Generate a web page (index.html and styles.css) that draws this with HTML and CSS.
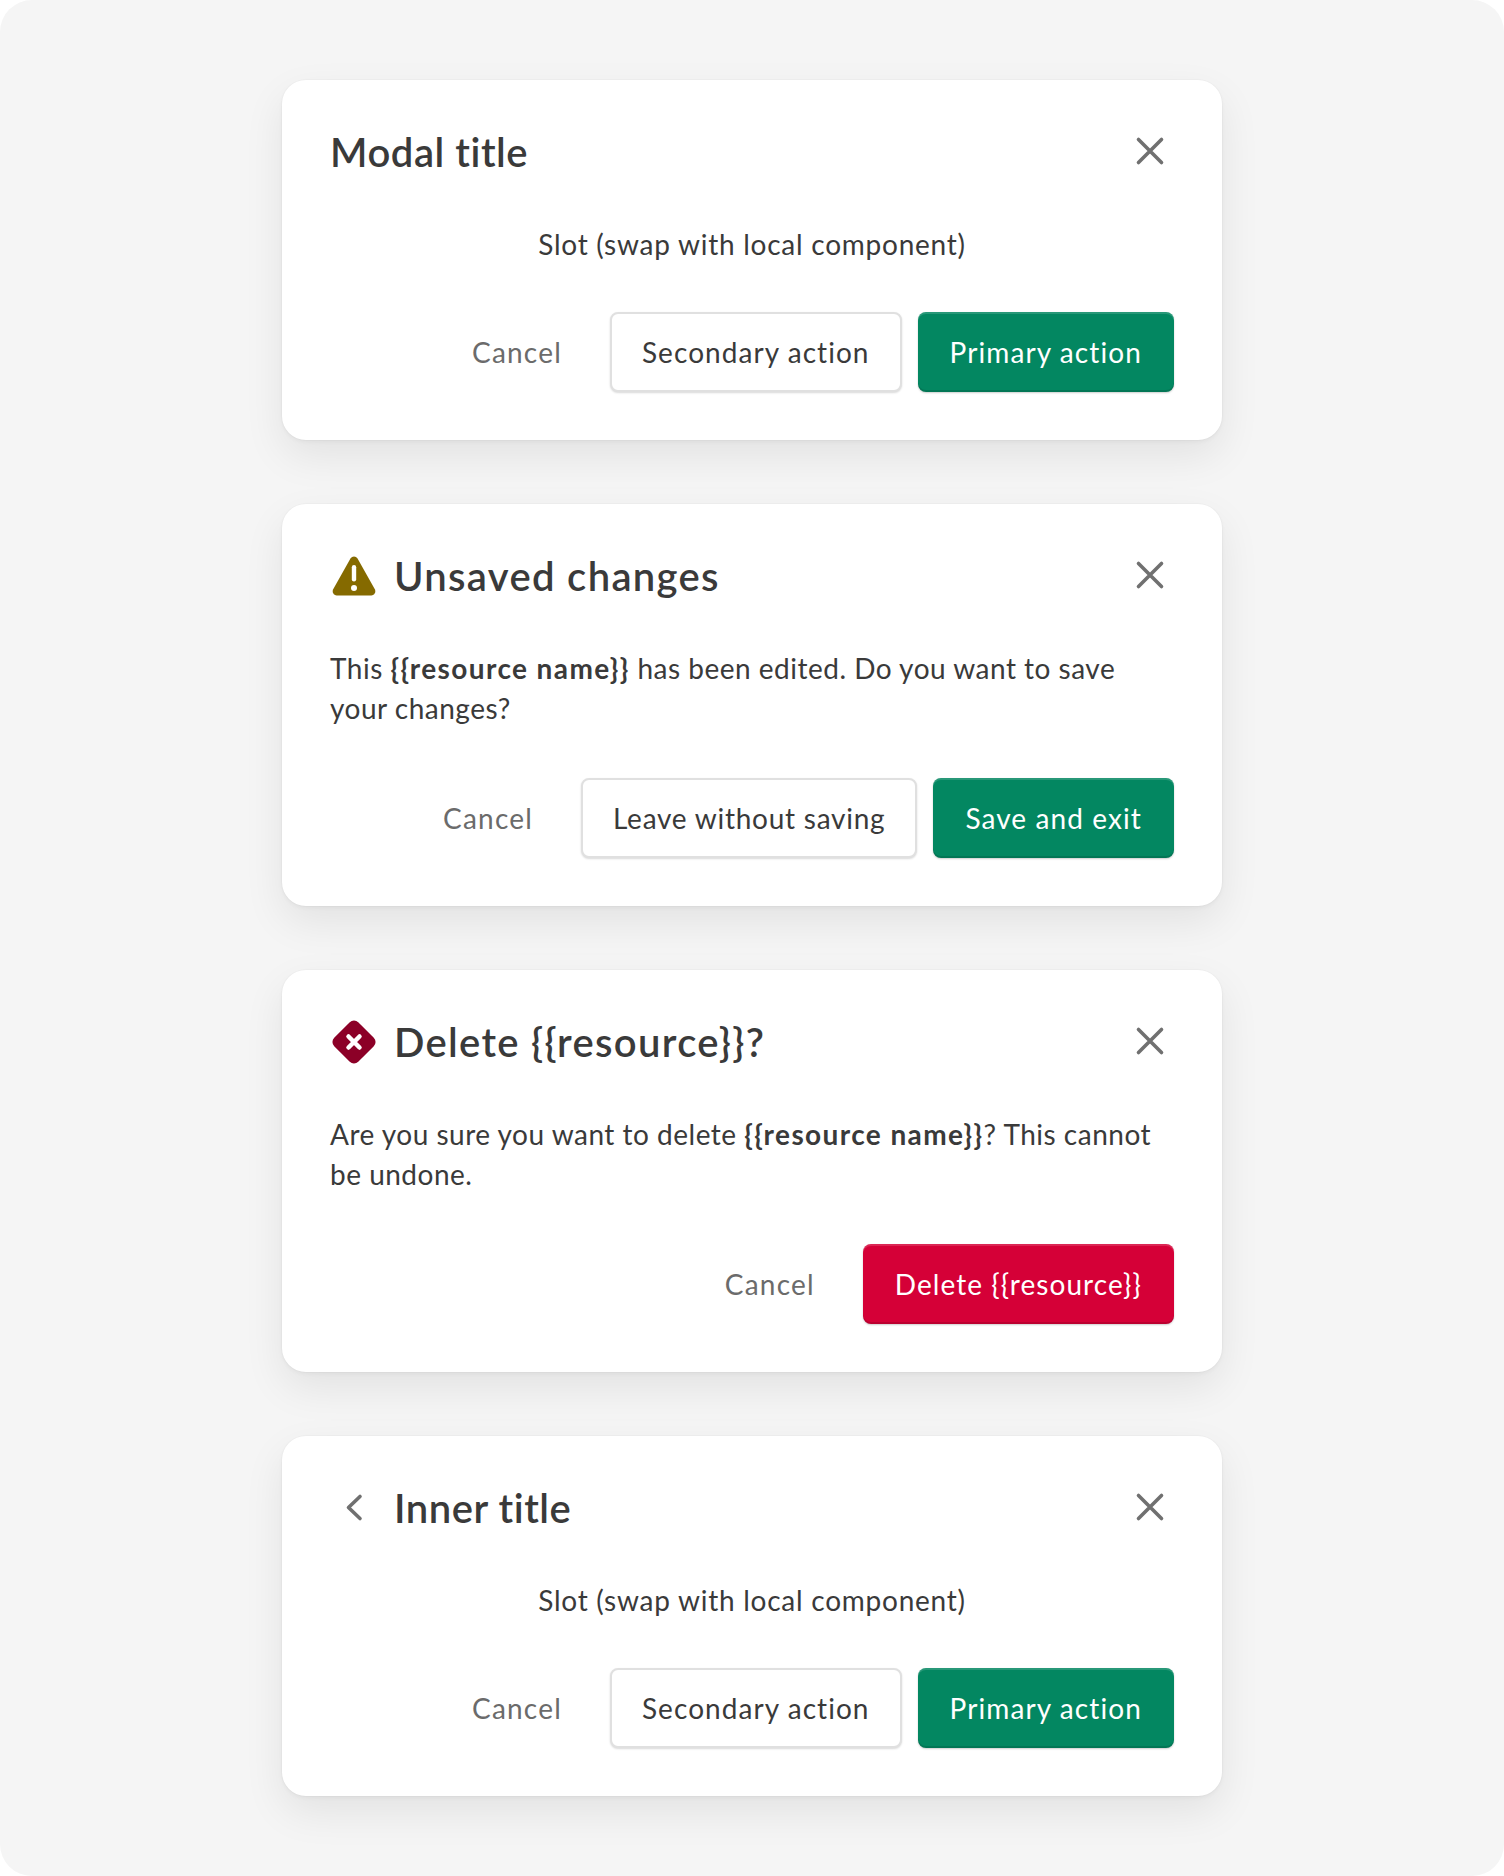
FILE: index.html
```html
<!DOCTYPE html>
<html lang="en">
<head>
<meta charset="utf-8">
<title>Modals</title>
<link rel="stylesheet" href="styles.css">
</head>
<body>
<main class="canvas">
  <section class="modal">
    <header class="modal-head">
      <h2 class="title">Modal title</h2>
      <button class="close" aria-label="Close"><svg viewBox="0 0 48 48" class="icon"><path d="M12.500 11.500l23 23M35.500 11.500l-23 23"/></svg></button>
    </header>
    <p class="body center">Slot (swap with local component)</p>
    <footer class="actions">
      <button class="btn ghost">Cancel</button>
      <button class="btn secondary">Secondary action</button>
      <button class="btn primary">Primary action</button>
    </footer>
  </section>

  <section class="modal">
    <header class="modal-head">
      <svg viewBox="0 0 48 48" class="lead warn"><path class="fill" d="M20.500 6.500c1.600-2.800 5.400-2.800 7 0l17.300 30.800c1.500 2.700-.4 6.200-3.500 6.200H6.700c-3.100 0-5-3.500-3.500-6.200z"/><rect class="mark" x="21.800" y="13" width="4.400" height="16.500" rx="2.200"/><circle class="mark" cx="24" cy="36" r="3"/></svg>
      <h2 class="title wide">Unsaved changes</h2>
      <button class="close" aria-label="Close"><svg viewBox="0 0 48 48" class="icon"><path d="M12.500 11.500l23 23M35.500 11.500l-23 23"/></svg></button>
    </header>
    <p class="body multi">This <strong>{{resource name}}</strong> has been edited. Do you want to save your changes?</p>
    <footer class="actions">
      <button class="btn ghost">Cancel</button>
      <button class="btn secondary tight">Leave without saving</button>
      <button class="btn primary">Save and exit</button>
    </footer>
  </section>

  <section class="modal">
    <header class="modal-head">
      <svg viewBox="0 0 48 48" class="lead err"><rect class="fill" x="7" y="7" width="34" height="34" rx="6" transform="rotate(45 24 24)"/><path class="cross" d="M18.500 18.500l11 11M29.500 18.500l-11 11"/></svg>
      <h2 class="title wide">Delete {{resource}}?</h2>
      <button class="close" aria-label="Close"><svg viewBox="0 0 48 48" class="icon"><path d="M12.500 11.500l23 23M35.500 11.500l-23 23"/></svg></button>
    </header>
    <p class="body multi">Are you sure you want to delete <strong>{{resource name}}</strong>? This cannot be undone.</p>
    <footer class="actions">
      <button class="btn ghost">Cancel</button>
      <button class="btn danger">Delete {{resource}}</button>
    </footer>
  </section>

  <section class="modal">
    <header class="modal-head">
      <svg viewBox="0 0 48 48" class="lead back"><path d="M30 12.500L18.500 23.500L30 34.500"/></svg>
      <h2 class="title">Inner title</h2>
      <button class="close" aria-label="Close"><svg viewBox="0 0 48 48" class="icon"><path d="M12.500 11.500l23 23M35.500 11.500l-23 23"/></svg></button>
    </header>
    <p class="body center">Slot (swap with local component)</p>
    <footer class="actions">
      <button class="btn ghost">Cancel</button>
      <button class="btn secondary">Secondary action</button>
      <button class="btn primary">Primary action</button>
    </footer>
  </section>
</main>
</body>
</html>
```

FILE: styles.css
```css
* { box-sizing: border-box; }
html, body { margin: 0; background: #fff; }
body { font-family: "Lato", "Liberation Sans", sans-serif; color: #3a3a3a; }
.canvas {
  width: 1504px;
  height: 1876px;
  background: #f5f5f5;
  border-radius: 32px;
  padding: 80px 282px;
  display: flex;
  flex-direction: column;
  gap: 64px;
}
.modal {
  background: #fff;
  border-radius: 24px;
  padding: 48px;
  display: flex;
  flex-direction: column;
  gap: 48px;
  box-shadow: 0 0 0 1px rgba(0,0,0,.015), 0 2px 4px rgba(0,0,0,.04), 0 16px 40px rgba(0,0,0,.08);
}
.modal-head { display: flex; align-items: center; height: 48px; gap: 16px; }
.title { margin: 0; flex: 1; font-size: 40px; line-height: 48px; font-weight: 600; color: #3a3a3a; letter-spacing: 0.55px; }
.wide { letter-spacing: 1.32px; }
.close { width: 48px; height: 48px; padding: 0; border: 0; background: none; flex: none; }
.icon { display: block; width: 48px; height: 48px; fill: none; stroke: #707070; stroke-width: 3.6; stroke-linecap: round; }
.lead { display: block; width: 48px; height: 48px; flex: none; }
.warn .fill { fill: #856a00; }
.warn .mark { fill: #fff; }
.err .fill { fill: #8c0027; }
.err .cross { fill: none; stroke: #fff; stroke-width: 4.5; stroke-linecap: round; }
.back { fill: none; stroke: #707070; stroke-width: 3.6; stroke-linecap: round; stroke-linejoin: round; }
.body { margin: 0; font-size: 28px; line-height: 40px; letter-spacing: 0.75px; color: #3a3a3a; }
.body strong { font-weight: 700; letter-spacing: 1.4px; }
.multi { padding-bottom: 2px; letter-spacing: 0.5px; }
.center { text-align: center; }
.actions { display: flex; justify-content: flex-end; gap: 16px; }
.btn {
  height: 80px;
  padding: 0 32px;
  font: inherit;
  font-size: 28px;
  letter-spacing: 0.85px;
  border-radius: 8px;
  border: 0;
  background: none;
  white-space: nowrap;
}
.ghost { color: #6b6b6b; letter-spacing: 1.2px; }
.secondary { background: #fff; color: #3a3a3a; letter-spacing: 1.05px; padding: 0 30px; border: 2px solid #e0e0e0; box-shadow: 0 1px 2px rgba(0,0,0,.15); }
.tight { letter-spacing: 0.75px; }
.primary { background: #038761; color: #fff; letter-spacing: 1.1px; box-shadow: inset 0 2px 0 rgba(255,255,255,.15), inset 0 -2px 0 rgba(0,0,0,.12), 0 1px 2px rgba(0,0,0,.2); }
.danger { background: #d50037; color: #fff; letter-spacing: 1.07px; box-shadow: inset 0 2px 0 rgba(255,255,255,.15), inset 0 -2px 0 rgba(0,0,0,.12), 0 1px 2px rgba(0,0,0,.2); }
```
